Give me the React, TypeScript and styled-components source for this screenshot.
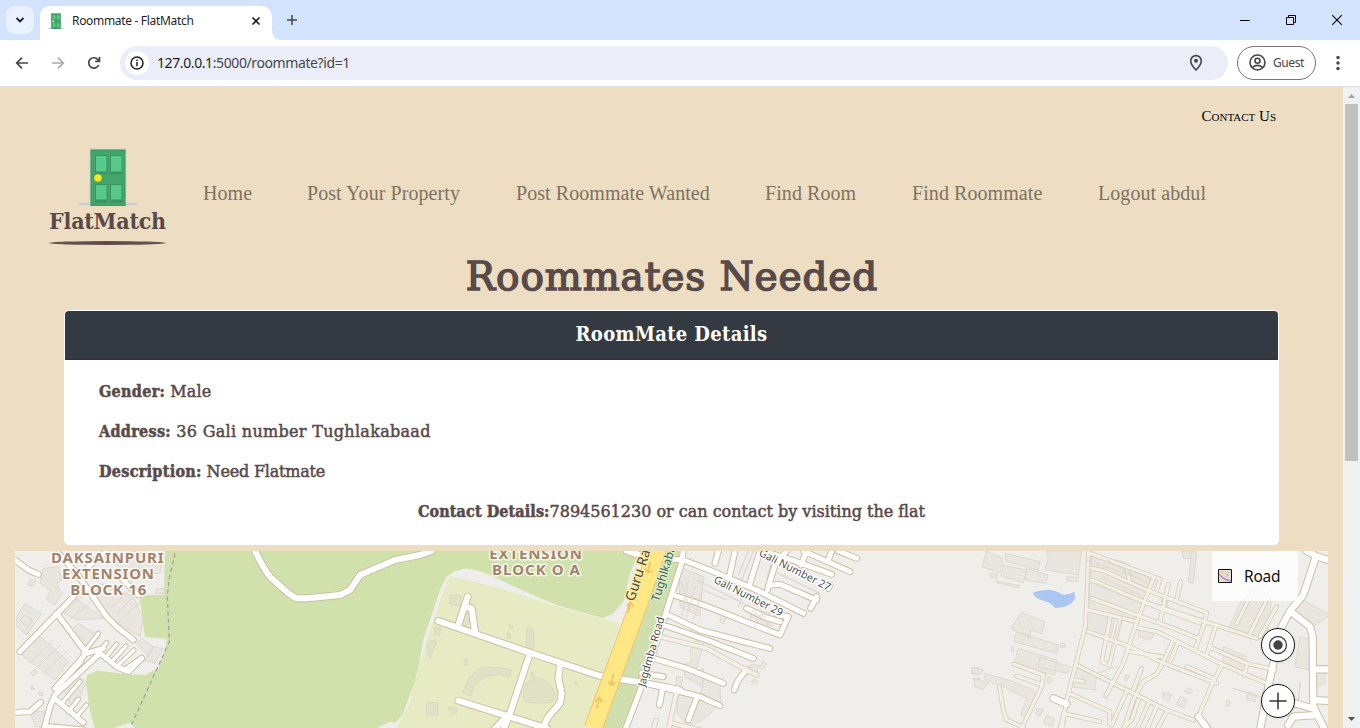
import React from 'react';
import styled, { createGlobalStyle } from 'styled-components';

const GlobalStyle = createGlobalStyle`
  * { box-sizing: border-box; }
  html, body { margin: 0; padding: 0; overflow: hidden; }
  body { font-family: "Noto Sans", sans-serif; background: #fff; }
`;

const ui = '"Noto Sans", "Open Sans", sans-serif';
const display = '"DejaVu Serif Condensed", "DejaVu Serif", serif';
const displayWide = '"DejaVu Serif", serif';

const Window = styled.div`
  width: 1360px;
  height: 728px;
  display: flex;
  flex-direction: column;
  overflow: hidden;
`;

/* Browser chrome */
const TabStrip = styled.div`
  height: 40px;
  flex: none;
  display: flex;
  background: #d3e3fd;
`;
const TabSearch = styled.div`
  width: 28px;
  height: 28px;
  margin: 6px 6px 0;
  border-radius: 9px;
  background: #e9f0fe;
  display: flex;
  align-items: center;
  justify-content: center;
`;
const Tab = styled.div`
  width: 232px;
  height: 34px;
  margin-top: 6px;
  padding: 0 10px 5px 8px;
  border-radius: 10px 10px 0 0;
  background: #fff;
  display: flex;
  align-items: center;
`;
const TabFoot = styled.svg`
  width: 10px;
  height: 10px;
  align-self: flex-end;
  margin-right: -10px;
`;
const TabTitle = styled.span`
  flex: 1;
  margin-left: 8px;
  font: 12px ${ui};
  letter-spacing: -0.32px;
  color: #1f1f1f;
  white-space: nowrap;
`;
const NewTab = styled.svg`
  width: 12px;
  height: 12px;
  margin: 14px 0 0 14px;
`;
const WindowButtons = styled.div`
  margin-left: auto;
  display: flex;
  height: 40px;
`;
const WindowButton = styled.div`
  width: 46px;
  height: 40px;
  display: flex;
  align-items: center;
  justify-content: center;
`;
const Toolbar = styled.div`
  height: 47px;
  flex: none;
  display: flex;
  align-items: center;
  padding: 0 14px 1px 14px;
  background: #fff;
  border-bottom: 1px solid #dfe1e4;
`;
const ToolIcon = styled.svg`
  width: 16px;
  height: 16px;
  margin-right: 20px;
  flex: none;
`;
const AddressBar = styled.div`
  width: 1108px;
  height: 34px;
  margin-left: -2px;
  border-radius: 17px;
  background: #ebeef8;
  display: flex;
  align-items: center;
  padding: 0 24px 0 5px;
`;
const SiteInfo = styled.div`
  width: 24px;
  height: 24px;
  border-radius: 50%;
  background: #fff;
  display: flex;
  align-items: center;
  justify-content: center;
`;
const Url = styled.span`
  flex: 1;
  margin-left: 8px;
  font: 14px ${ui};
  letter-spacing: -0.4px;
  color: #474747;
  b { font-weight: 400; color: #1f1f1f; }
`;
const Guest = styled.div`
  width: 79px;
  height: 34px;
  margin-left: 9px;
  padding-left: 11px;
  border: 1px solid #747775;
  border-radius: 17px;
  display: flex;
  align-items: center;
  gap: 7px;
  font: 12px ${ui};
  letter-spacing: -0.4px;
  color: #474747;
`;
const Kebab = styled.svg`
  width: 4px;
  height: 16px;
  margin-left: 20px;
`;

/* Page */
const Viewport = styled.div`
  flex: 1;
  min-height: 0;
  display: flex;
`;
const Page = styled.main`
  width: 1343px;
  background: #eddec3;
  overflow: hidden;
`;
const TopRow = styled.div`
  height: 61px;
  display: flex;
  justify-content: flex-end;
  padding: 20px 67px 0 0;
`;
const ContactLink = styled.a`
  font: 15px/18px "Liberation Serif", serif;
  font-variant: small-caps;
  color: #000;
`;
const Header = styled.header`
  height: 99px;
  display: flex;
  padding-left: 49px;
`;
const Brand = styled.div`
  width: 117px;
  display: flex;
  flex-direction: column;
  align-items: center;
`;
const BrandName = styled.div`
  height: 30px;
  font: bold 23px/30px ${display};
  letter-spacing: -0.25px;
  color: #594a4a;
  white-space: nowrap;
`;
const BrandRule = styled.div`
  width: 117px;
  height: 4px;
  margin-top: 5px;
  border-radius: 50%;
  background: radial-gradient(ellipse at center, #594545 0%, #6a5552 70%, #8e7b71 100%);
`;
const Nav = styled.nav`
  display: flex;
  gap: 55px;
  margin: 33px 0 0 37px;
`;
const NavLink = styled.a<{ $w: number }>`
  width: ${(p) => p.$w}px;
  font: 20px/24px "Liberation Serif", serif;
  letter-spacing: 0.07px;
  color: #7d7260;
  white-space: nowrap;
`;
const Title = styled.h1`
  margin: 0;
  height: 63px;
  padding: 1px 0 0 1px;
  font: 39px/58px ${displayWide};
  letter-spacing: 0.9px;
  text-align: center;
  color: #594a4a;
  -webkit-text-stroke: 1.500px #594a4a;
  white-space: nowrap;
`;
const Card = styled.section`
  width: 1215px;
  height: 235px;
  margin: 0 auto 6px;
  background: #fff;
  border: 1px solid #fff;
  border-radius: 5px;
  overflow: hidden;
`;
const CardHeader = styled.div`
  height: 49px;
  background: #343a41;
  border-bottom: 1px solid #2b3036;
  font: bold 20px/46px ${display};
  letter-spacing: 0.35px;
  text-align: center;
  color: #fff;
`;
const CardBody = styled.div`
  padding: 12px 34px;
`;
const Detail = styled.p<{ $center?: boolean; $tracking: number }>`
  margin: 0;
  height: 40px;
  font: 16px/40px ${displayWide};
  letter-spacing: ${(p) => p.$tracking}px;
  color: #594a4a;
  text-align: ${(p) => (p.$center ? 'center' : 'left')};
  -webkit-text-stroke: 0.5px #594a4a;
  b { font-family: ${display}; letter-spacing: ${(p) => (p.$center ? 0.1 : 0.3)}px; }
`;
const MapFrame = styled.div`
  position: relative;
  width: 1313px;
  height: 177px;
  margin-left: 15px;
`;
const MapSvg = styled.svg`
  display: block;
  width: 1313px;
  height: 177px;
`;
const MapStyle = styled.div`
  position: absolute;
  top: 0;
  right: 30px;
  width: 86px;
  height: 50px;
  padding-left: 6px;
  display: flex;
  align-items: center;
  gap: 12px;
  background: rgba(255, 255, 255, 0.8);
  font: 15.5px ${ui};
  letter-spacing: -0.2px;
  color: #111;
`;
const MapControls = styled.div`
  position: absolute;
  top: 77px;
  right: 33px;
  display: flex;
  flex-direction: column;
  gap: 22px;
`;
const RoundButton = styled.div`
  width: 34px;
  height: 34px;
  border-radius: 50%;
  border: 1px solid #1b1b1b;
  background: #fff;
  box-shadow: 0 0 3px rgba(0, 0, 0, 0.15);
  display: flex;
  align-items: center;
  justify-content: center;
`;
const Scrollbar = styled.div`
  width: 17px;
  background: #f1f1f1;
  display: flex;
  flex-direction: column;
  align-items: center;
`;
const ScrollArrow = styled.svg`
  width: 17px;
  height: 17px;
`;
const Thumb = styled.div`
  width: 13px;
  height: 357px;
  margin-bottom: auto;
  background: #c1c1c1;
`;

function Door({ width, height }: { width: number; height: number }) {
  return (
    <svg width={width} height={height} viewBox="0 0 58 58">
      <path d="M0 54.500h58v3H0z" fill="#cdced0" />
      <path d="M10.500 0.500h37v57h-37z" fill="#cdd1cd" />
      <path d="M12 2h34V58H12z" fill="#42a66c" stroke="#389660" />
      <path d="M16 7h12.500v19H16zM31 7h12v19H31zM16 36h12.500v19H16zM31 36h12.500v19H31z" fill="#3b945f" />
      <path d="M17 8h10.500v15.500H17zM32 8h10.500v15.500H32zM17 37h10.500v14.500H17zM32 37h10.500v14.500H32z" fill="#57c98a" />
      <circle cx="19" cy="30" r="3.700" fill="#fce81e" />
    </svg>
  );
}

type Road = { x: number; d: string; w: number; minor?: boolean };

/* Streets: x is the horizontal offset of the map tile that each path is in. */
const roads: Road[] = [
  { x: 2880, minor: true, w: 10, d: 'M385 33L383 130L376 260L348 370L320 480L305 570M385 38L580 110L600 118L590 150M390 83L430 92L560 150L740 218L735 245L705 330M500 92L508 120M395 120L550 185L735 245L890 295M395 175L530 225L640 265L715 295M385 210L530 245L525 262L590 275L640 298L780 370L920 430M580 115L555 180L525 262L490 370L437 468M625 133L600 245M662 125L650 180M450 235L425 365L447 377L480 240M385 275L510 320L600 365L770 430M510 335L605 350M560 190L720 250M768 255L740 345M750 322L860 370L945 390M862 370L852 405M655 305L630 365M640 300L600 385L590 402L550 425L520 480L490 570M680 380L760 415M350 375L500 450L620 510L700 540M332 462L450 515L448 550M545 385L520 450M788 372L755 435L715 530M500 455L455 555M565 490L530 570M590 500L560 570M620 515L590 570M535 480L515 540L485 570M310 520L420 545M162 372L250 405L245 440L190 555M170 408L240 432M118 440L130 510L140 540L190 562M345 420L370 425M310 525L300 570M830 250L885 140M870 280L930 160M900 290L950 200' },
  { x: 2880, w: 20, d: 'M1068 48L1030 165L990 213L965 260M990 213L1050 260L1058 290L1060 500L1095 570M1068 48L1110 62M1040 33L1068 48M1060 480L1110 483M1065 388L1110 388M940 370L925 440L900 570M1005 490L1055 505M985 555L1000 530L1070 525M715 530L745 570M280 475L320 492' },
  { x: 1920, w: 16, d: 'M130 33L125 68L80 210L20 400L-45 570M50 55L130 60L220 95L350 150L490 220M235 33L225 70M285 33L268 110M360 33L330 130M405 75L382 150M405 75L440 33M395 135L420 133L530 180M530 170L512 205M370 33L470 65L575 103M490 33L630 95M500 33L483 75M575 33L565 60M595 33L650 55M100 165L190 195L330 250L420 285L445 230L415 225M320 205L375 232L420 245M85 225L180 270L310 305L390 325M70 255L200 300L340 355M40 355L140 385L250 430M5 400L70 410M0 425L100 450L180 470L240 497M68 445L58 495M172 470L145 540M320 390Q290 420 283 450M570 135L565 145' },
  { x: 1920, minor: true, w: 12, d: 'M60 290L200 325L300 380L350 405M110 455L85 570M95 550L180 570M48 540L40 570' },
  { x: 1020, w: 19, d: 'M295 243L560 335L780 408L920 430L1020 450M355 255L383 170M375 200L395 205L405 275M570 340L510 520L490 570M660 375L655 415L665 460L660 490L625 530L605 570M355 482L620 565M510 520L460 570M860 33L930 55M-255 33Q-228 88 -210 110L-155 160L-132 175L-95 175L0 165L30 150L60 105L165 60L240 45L275 33' },
  { x: 0, w: 16, d: 'M45 60L85 90L115 103M60 335L235 155M170 220L260 340L310 325M175 40L230 100L320 230L350 260L400 300M265 80L320 33M350 100L415 165M295 335L350 380L385 395L425 355M300 340L165 465L150 500L132 570M165 445L250 350M170 480L250 548M45 517L90 515L122 487M150 560L250 570' },
  { x: 0, w: 11, d: 'M250 340L295 280M290 345L320 308M315 355L350 312M335 365L378 318M355 375L402 330M370 390L425 352M185 490L240 425M205 515L235 478M230 530L260 495M170 445L245 365' },
];

type Plot = [number, string];
const buildings: Plot[] = [
  [0, 'M130 85L175 80L185 120L170 130L185 160L165 195L140 180L150 150L120 130ZM90 118L108 120L100 140L85 135ZM50 230L75 190L125 220L80 285L50 260ZM60 240L75 225L98 242L82 262ZM220 170L310 235L230 240L185 215ZM300 130L400 170L430 240L420 290L340 240L280 165ZM110 280L205 365L165 420L65 345ZM235 250L300 290L260 330L215 270ZM190 225L245 170M210 240L270 185M330 205L390 150M350 220L405 165M370 235L425 180M90 370L160 300M110 385L180 315M130 400L205 330M425 295L460 320L445 350L410 310ZM460 320L490 325L465 370L435 360ZM90 400L105 387L115 397L100 408ZM95 435L105 448L94 448ZM90 515L135 515L130 560L105 560ZM190 450L235 410L260 425L240 470L215 500ZM340 60L400 33L490 50L480 100L370 100ZM468 147L492 145L492 160L468 160ZM118 455L130 460L124 468L115 462Z'],
  [1020, 'M330 165L365 168L360 200L328 190ZM285 262L302 265L298 288L282 282ZM270 300L290 305L280 330L268 357L260 320ZM560 265L580 265L582 325L560 328ZM502 280L512 280L510 295L502 295ZM372 358L384 358L384 374L372 374ZM368 455L390 410L425 380L495 385L515 390L507 412L480 402L435 410L405 435L390 468ZM260 488L293 488L293 525L260 525ZM325 500L350 505L350 518L335 525ZM575 395L585 410Q640 425 645 465L635 487L600 490L555 485Q540 440 575 415ZM365 245L385 210L395 220L378 262ZM703 425L712 425L712 433L703 433ZM509 256L518 256L518 263L509 263Z'],
  [1920, 'M115 80L190 110L180 230L120 200ZM335 205L390 220L380 262L330 240ZM150 330L168 300L195 300L180 350L165 400L190 385L188 440L135 410L130 375L155 365ZM110 410L128 412L122 450L108 440ZM195 405L240 425L242 490L200 530L150 560L110 520L115 465L180 465ZM330 375L355 375L350 410L325 395ZM357 380L370 362L380 372L365 390ZM345 417L354 427L343 434L334 425ZM245 220L262 225L250 250L240 245ZM995 385L1015 382L1020 400L995 400ZM1000 415L1020 415L1020 440L1005 435Z'],
  [2880, 'M80 33L128 55L120 98L66 80ZM130 75L200 90L190 128L124 108ZM135 40L240 65L235 90L140 65ZM200 85L264 105L258 130L195 120ZM260 33L365 33L355 105L254 90L265 55ZM320 110L355 112L355 125L320 122ZM90 100L112 103L110 115L90 110ZM110 122L180 137L175 143L110 128ZM185 218L255 245L245 280L212 270L210 295L152 265ZM170 275L295 315L290 340L162 305ZM175 325L290 360L285 405L240 395L165 365ZM240 353L332 380L322 400L235 382ZM35 382L70 390L60 405L35 400ZM45 415L85 430L70 448L42 440ZM75 400L160 425L220 450L230 480L200 535L182 525L200 475L140 445L75 420ZM395 45L490 65L570 115L545 230L520 250L385 205ZM385 215L465 235L450 300L380 270ZM375 385L410 400L405 450L330 440L345 385ZM265 410L280 418L270 430L260 425ZM155 320L162 320L160 335L154 335ZM302 311L315 311L315 322L302 322ZM535 265L585 280L570 300L535 290ZM610 458L635 463L625 483L608 475ZM685 443L698 452L690 462L673 455ZM660 470L680 478L670 503L648 493ZM845 180L900 145L935 170L920 300L805 265ZM790 320L860 350L850 400L790 375ZM1020 175L1110 225L1060 260L1000 210ZM1020 290L1055 300L1045 390L1005 380ZM665 33L690 33L690 55L670 55ZM695 35L710 35L700 130L685 125ZM925 455L940 460L935 480L920 475ZM865 455L890 465L885 485L860 480ZM1065 395L1095 395L1095 430L1070 440ZM960 480L1000 490L985 530L960 520ZM800 480L812 485L805 500L798 495ZM495 405L507 408L500 425L494 420ZM230 505L250 510L240 530L228 525ZM260 525L285 540L275 560L250 550ZM605 165L625 165L620 215L605 215Z'],
];

function Streets({ casing }: { casing: boolean }) {
  return (
    <g fill="none" strokeLinecap="round" strokeLinejoin="round">
      {roads.map((r, i) => (
        <path
          key={i}
          d={r.d}
          transform={`translate(${r.x} 0)`}
          strokeWidth={casing ? r.w + 4.500 : r.w - 1}
          stroke={casing ? (r.minor ? '#d6cfc0' : '#cbbb9f') : r.minor ? '#f5f0e5' : '#fff'}
        />
      ))}
    </g>
  );
}

function CityMap() {
  return (
    <MapSvg viewBox="45 33 3939 531">
      <rect x="45" y="33" width="3939" height="531" fill="#efeeea" />
      <path d="M495 33L492 165L425 165L420 180L435 290L500 297L495 330L475 385L435 405L385 403L290 392L262 405L258 430L270 510L285 570L340 564L390 548L405 564L1130 564L1170 545L1185 550L1210 520L1250 410L1270 300L1320 150L1340 110L1360 95L1400 85L1450 97L1620 175L1670 195L1810 235L1840 220L1870 185L1890 100L1910 50L1880 33Z" fill="#d1e1ab" />
      <path d="M1188 564L1225 500L1250 400L1290 270L1340 125L1350 108L1500 145L1690 205L1860 250L1760 564Z" fill="#e6ebc3" />
      <path d="M1975 33L2045 33L2030 110L1880 564L1785 564Z" fill="#cfe0ae" />
      <path d="M3098 158Q3120 148 3150 150Q3172 152 3185 163Q3200 167 3224 155V178Q3212 196 3190 201L3165 204Q3152 186 3130 182Q3106 176 3098 158Z" fill="#aac7f4" />
      <g fill="#e9e6df" stroke="#d9d5cc" strokeWidth="2.500">
        {buildings.map(([x, d], i) => (
          <path key={i} d={d} transform={`translate(${x} 0)`} fill={x === 1020 ? '#e0e2c5' : undefined} stroke={x === 1020 ? '#d5d8ba' : undefined} />
        ))}
      </g>
      <path d="M2090 120L2230 190M2110 150L2180 180M2330 98L2460 160M2260 33L2225 120M2245 33L2215 105M2320 45L2300 120M2215 200L2230 165M3700 445L3780 470M3900 425L3895 490" fill="none" stroke="#dad8d3" strokeWidth="4" />
      <Streets casing />
      <Streets casing={false} />
      <path d="M2044 125L2070 210M2065 120L2045 230M2085 140L2060 235M2110 145L2080 240M3260 60L3430 120M3290 130L3420 190M3270 50L3265 200M3320 60L3440 130M3370 220L3320 380M3350 380L3290 400M3300 110L3430 170M2254 210L2320 260M2280 205L2310 265M2290 215L2260 260" stroke="#ddd5c9" strokeWidth="5" opacity="0.6" fill="none" />
      <path d="M525 40L507 120L502 170L508 305L395 553" fill="none" stroke="#9a9ca0" strokeWidth="3.500" strokeDasharray="13 9" />
      <path d="M1975 20L1917 190L1780 564" fill="none" stroke="#f5bb6b" strokeWidth="56" />
      <path d="M1975 20L1917 190L1780 564" fill="none" stroke="#ffe884" strokeWidth="51" />
      <g fill="none" stroke="#ecc368" strokeWidth="5">
        <path d="M1951 65L1943 98M1935 85L1943 98L1957 92M1884 218L1892 187M1880 198L1892 187L1901 201M1840 402L1834 435M1825 423L1834 436L1846 427M1790 506L1798 473M1785 485L1798 472L1807 486" />
      </g>
      <g fontFamily="Noto Sans, sans-serif" paintOrder="stroke" stroke="#fff" strokeLinejoin="round">
        <g fill="#a3846b" fontWeight="bold" fontSize="45" strokeWidth="9" textAnchor="middle" strokeOpacity="0.8">
          <text x="322" y="69" textLength="338">DAKSAINPURI</text>
          <text x="324" y="117" textLength="276">EXTENSION</text>
          <text x="325" y="165" textLength="228">BLOCK 16</text>
          <text x="1607" y="57" textLength="278">EXTENSION</text>
          <text x="1608" y="105" textLength="264">BLOCK O A</text>
        </g>
        <g fill="#4c4c4c" strokeWidth="8">
          <text fontSize="41" transform="translate(1902 186) rotate(-72)" textLength="160" stroke="#ffe994">Guru Ra</text>
          <text fontSize="35" transform="translate(1977 186) rotate(-73)" textLength="195" fill="#3f6543" stroke="#dceaca">Tughlkabad</text>
          <text fontSize="32" transform="translate(1934 442) rotate(-74)" textLength="216">Jagdmba Road</text>
          <text fontSize="32" transform="translate(2139 126) rotate(27)" textLength="228">Gali Number 29</text>
          <text fontSize="32" transform="translate(2275 46) rotate(27)" textLength="236">Gali Number 27</text>
        </g>
      </g>
    </MapSvg>
  );
}

const links: [string, number][] = [
  ['Home', 49],
  ['Post Your Property', 154],
  ['Post Roommate Wanted', 194],
  ['Find Room', 92],
  ['Find Roommate', 131],
  ['Logout abdul', 110],
];

export default function App() {
  return (
    <Window>
      <GlobalStyle />
      <TabStrip>
        <TabSearch>
          <svg width="10" height="6" viewBox="0 0 10 6"><path d="M1.500 1L5 4.500L8.500 1" fill="none" stroke="#1f1f1f" strokeWidth="1.800" /></svg>
        </TabSearch>
        <Tab>
          <Door width={16} height={16} />
          <TabTitle>Roommate - FlatMatch</TabTitle>
          <svg width="12" height="12" viewBox="0 0 12 12"><path d="M2.500 2.500L9.500 9.500M9.500 2.500L2.500 9.500" stroke="#1f1f1f" strokeWidth="1.600" /></svg>
        </Tab>
        <TabFoot viewBox="0 0 10 10"><path d="M0 0Q0 10 10 10H0Z" fill="#fff" /></TabFoot>
        <NewTab viewBox="0 0 12 12"><path d="M6 1V11M1 6H11" stroke="#444746" strokeWidth="1.500" /></NewTab>
        <WindowButtons>
          <WindowButton><svg width="10" height="10"><path d="M0 5.500H10" stroke="#000" /></svg></WindowButton>
          <WindowButton><svg width="10" height="10" fill="none" stroke="#000"><path d="M.5 2.500H7.500V9.500H.5ZM2.500 2.500V.5H9.500V7.500H7.500" /></svg></WindowButton>
          <WindowButton><svg width="10" height="10"><path d="M0 0L10 10M10 0L0 10" stroke="#000" strokeWidth="1.100" /></svg></WindowButton>
        </WindowButtons>
      </TabStrip>
      <Toolbar>
        <ToolIcon viewBox="0 0 16 16"><path d="M14 8H3M8 2.700L2.700 8L8 13.300" fill="none" stroke="#444746" strokeWidth="1.700" /></ToolIcon>
        <ToolIcon viewBox="0 0 16 16"><path d="M2 8H13M8 2.700L13.300 8L8 13.300" fill="none" stroke="#ababab" strokeWidth="1.700" /></ToolIcon>
        <ToolIcon viewBox="0 0 16 16"><path d="M12.700 10A5.200 5.200 0 1 1 12 4.700L13.400 6.100M13.500 2V6.300H9.200" fill="none" stroke="#444746" strokeWidth="1.700" /></ToolIcon>
        <AddressBar>
          <SiteInfo>
            <svg width="14" height="14" viewBox="0 0 14 14"><circle cx="7" cy="7" r="6" fill="none" stroke="#1f1f1f" strokeWidth="1.500" /><path d="M7 6V10.200M7 3.600V5" stroke="#1f1f1f" strokeWidth="1.500" /></svg>
          </SiteInfo>
          <Url><b>127.0.0.1</b>:5000/roommate?id=1</Url>
          <svg width="16" height="18" viewBox="0 0 16 18"><path d="M8 16Q2.700 10.500 2.700 6.900A5.300 5.300 0 0 1 13.300 6.900Q13.300 10.500 8 16Z" fill="none" stroke="#444746" strokeWidth="1.600" /><circle cx="8" cy="6.700" r="2" fill="#444746" /></svg>
        </AddressBar>
        <Guest>
          <svg width="17" height="17" viewBox="0 0 17 17" fill="none" stroke="#444746" strokeWidth="1.600"><circle cx="8.500" cy="8.500" r="7.500" /><circle cx="8.500" cy="6.700" r="2.500" /><path d="M3.300 13.500Q8.500 9.200 13.700 13.500" /></svg>
          Guest
        </Guest>
        <Kebab viewBox="0 0 4 16" fill="#444746"><circle cx="2" cy="2.500" r="1.700" /><circle cx="2" cy="8" r="1.700" /><circle cx="2" cy="13.500" r="1.700" /></Kebab>
      </Toolbar>
      <Viewport>
        <Page>
          <TopRow><ContactLink>Contact Us</ContactLink></TopRow>
          <Header>
            <Brand>
              <Door width={58} height={58} />
              <BrandName>FlatMatch</BrandName>
              <BrandRule />
            </Brand>
            <Nav>
              {links.map(([label, w]) => <NavLink key={label} $w={w}>{label}</NavLink>)}
            </Nav>
          </Header>
          <Title>Roommates Needed</Title>
          <Card>
            <CardHeader>RoomMate Details</CardHeader>
            <CardBody>
              <Detail $tracking={0.1}><b>Gender:</b> Male</Detail>
              <Detail $tracking={0.3}><b>Address:</b> 36 Gali number Tughlakabaad</Detail>
              <Detail $tracking={-0.2}><b>Description:</b> Need Flatmate</Detail>
              <Detail $center $tracking={0}><b>Contact Details:</b>7894561230 or can contact by visiting the flat</Detail>
            </CardBody>
          </Card>
          <MapFrame>
            <CityMap />
            <MapStyle>
              <svg width="14" height="14" viewBox="0 0 14 14"><path d="M.5.5H13.500V13.500H.5Z" fill="#e5dfd1" stroke="#111" /><path d="M1 5L5 9Q8 11 13 12" stroke="#b18bd0" strokeWidth="1.600" fill="none" /><path d="M3 3L6 2M1 8L5 3" stroke="#f6c75c" fill="none" /><path d="M7 4L11 7M8 8L11 3" stroke="#b5b09a" strokeWidth=".6" /></svg>
              Road
            </MapStyle>
            <MapControls>
              <RoundButton><svg width="20" height="20"><circle cx="10" cy="10" r="8.500" fill="none" stroke="#444" strokeWidth="1.300" /><circle cx="10" cy="10" r="4.700" fill="#444" /></svg></RoundButton>
              <RoundButton><svg width="18" height="18"><path d="M9 .5V17.500M.5 9H17.500" stroke="#333" strokeWidth="1.500" /></svg></RoundButton>
            </MapControls>
          </MapFrame>
        </Page>
        <Scrollbar>
          <ScrollArrow viewBox="0 0 17 17"><path d="M5 11L8.500 7L12 11Z" fill="#a3a3a3" /></ScrollArrow>
          <Thumb />
          <ScrollArrow viewBox="0 0 17 17"><path d="M5 6L8.500 10L12 6Z" fill="#505050" /></ScrollArrow>
        </Scrollbar>
      </Viewport>
    </Window>
  );
}
